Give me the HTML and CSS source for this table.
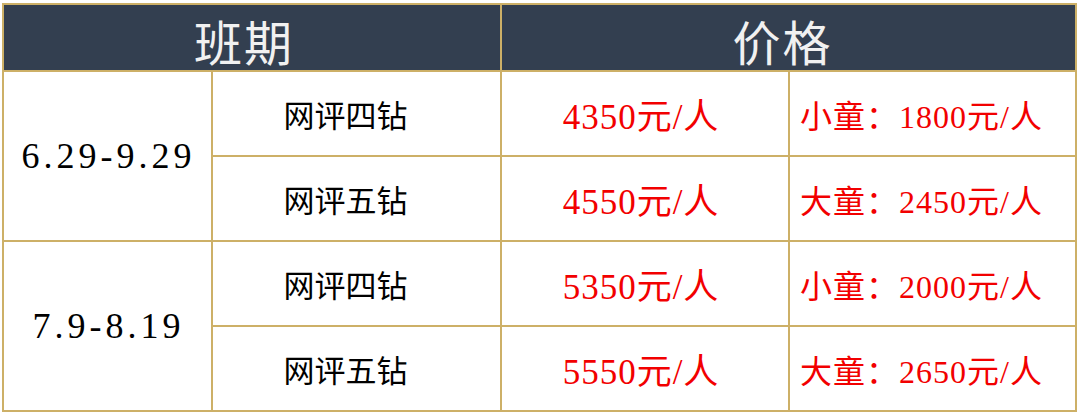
FILE: index.html
```html
<!DOCTYPE html>
<html lang="zh">
<head>
<meta charset="utf-8">
<link rel="stylesheet" href="styles.css">
</head>
<body>
<div class="sheet">
  <div class="grid">
    <div class="cell head span2">班期</div>
    <div class="cell head span2 head-price">价格</div>

    <div class="cell date rows2">6.29-9.29</div>
    <div class="cell cls">网评四钻</div>
    <div class="cell price">4350元/人</div>
    <div class="cell child">小童：1800元/人</div>

    <div class="cell cls">网评五钻</div>
    <div class="cell price">4550元/人</div>
    <div class="cell child">大童：2450元/人</div>

    <div class="cell date rows2">7.9-8.19</div>
    <div class="cell cls">网评四钻</div>
    <div class="cell price">5350元/人</div>
    <div class="cell child">小童：2000元/人</div>

    <div class="cell cls">网评五钻</div>
    <div class="cell price">5550元/人</div>
    <div class="cell child">大童：2650元/人</div>
  </div>
</div>
</body>
</html>
```

FILE: styles.css
```css
html, body {
  margin: 0;
  padding: 0;
  background: #ffffff;
}

.sheet {
  width: 1080px;
  height: 414px;
  padding: 3px 0 0 2px;
  box-sizing: border-box;
}

.grid {
  display: grid;
  grid-template-columns: 207px 287px 286px 285px;
  grid-template-rows: 65px 83px 83px 83px 83px;
  gap: 2px;
  padding: 2px;
  width: 1075px;
  box-sizing: border-box;
  background: #cdb067;
}

.cell {
  background: #ffffff;
  display: flex;
  align-items: center;
  justify-content: center;
  font-family: "Liberation Serif", "Noto Sans CJK SC", serif;
  color: #000000;
  white-space: nowrap;
}

.head {
  background: #333f50;
  color: #f1f1f1;
  font-family: "Noto Sans CJK SC", sans-serif;
  font-size: 48px;
  letter-spacing: 2px;
  padding-top: 4px;
  padding-right: 16px;
  box-sizing: border-box;
}

.head-price {
  padding-right: 12px;
}

.span2 {
  grid-column: span 2;
}

.rows2 {
  grid-row: span 2;
}

.date {
  font-size: 36px;
  letter-spacing: 4px;
  padding-left: 2px;
  box-sizing: border-box;
}

.cls {
  font-family: "Noto Sans CJK SC", sans-serif;
  font-size: 31px;
  padding-right: 22px;
  box-sizing: border-box;
}

.price {
  color: #f20000;
  font-size: 35px;
  letter-spacing: 1px;
  padding-right: 8px;
  box-sizing: border-box;
}

.child {
  color: #f20000;
  font-size: 32px;
  letter-spacing: 1px;
  padding-right: 22px;
  box-sizing: border-box;
}
```
